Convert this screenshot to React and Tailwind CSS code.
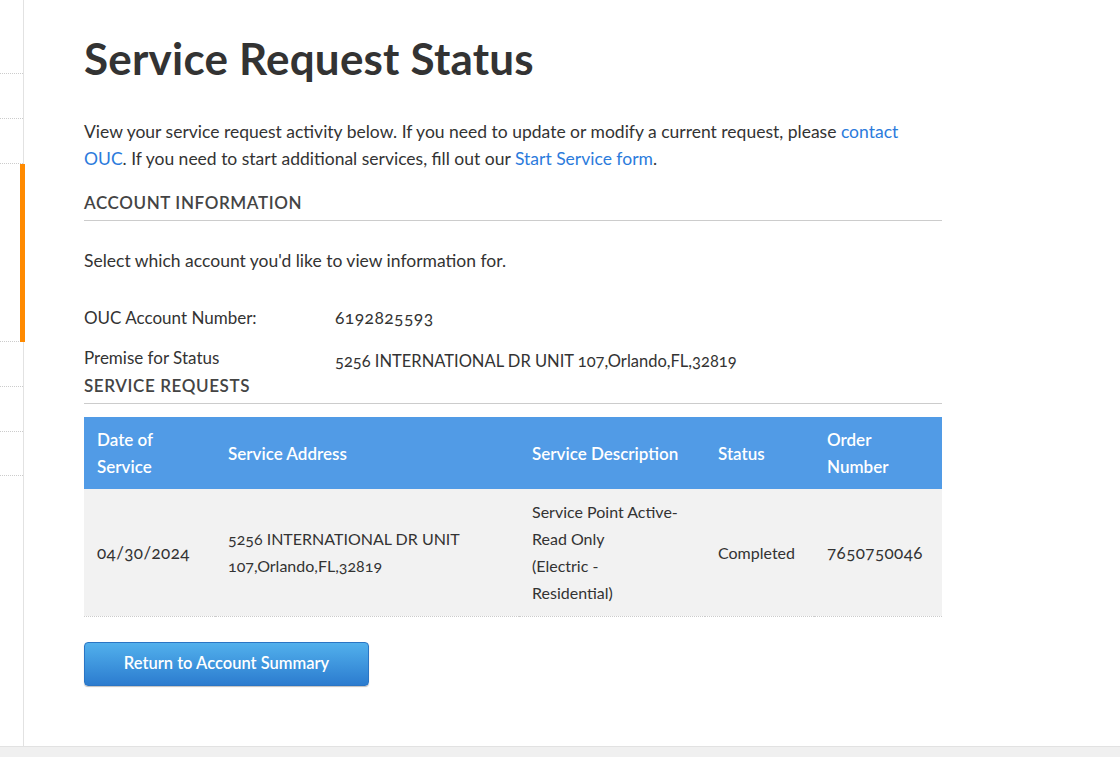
export default function App() {
  const font = { fontFamily: 'Lato, "Open Sans", sans-serif' };
  return (
    <div className="min-h-[757px] flex flex-col bg-white text-[#333] oldstyle-nums" style={font}>
      <div className="flex flex-1">
        <aside className="w-[24px] shrink-0 border-r border-[#e2e2e2] flex flex-col pt-[73px]">
          <div className="h-[45px] border-t border-dotted border-[#ccc]" />
          <div className="h-[45px] border-t border-dotted border-[#ccc]" />
          <div className="h-[178px] border-t border-dotted border-[#ccc] relative">
            <div className="absolute right-[-2px] top-0 h-[178px] w-[5px] bg-[#ff8a00]" />
          </div>
          <div className="h-[45px] border-t border-dotted border-[#ccc]" />
          <div className="h-[45px] border-t border-dotted border-[#ccc]" />
          <div className="h-[45px] border-t border-dotted border-[#ccc] border-b" />
        </aside>
        <main className="pl-[60px] pt-[30px] w-[918px]">
          <h1 className="text-[44px] font-bold leading-[56px] text-[#333] tracking-[0.2px]">Service Request Status</h1>
          <p className="mt-[32px] text-[17.5px] leading-[27px]">
            View your service request activity below. If you need to update or modify a current request, please{' '}
            <a className="text-[#2b7bdc]" href="#">contact OUC</a>. If you need to start additional services, fill out our{' '}
            <a className="text-[#2b7bdc]" href="#">Start Service form</a>.
          </p>
          <h2 className="mt-[19px] pb-[5px] border-b border-[#ccc] text-[17px] font-semibold uppercase tracking-[0.6px] text-[#444] leading-[24px]">
            Account Information
          </h2>
          <p className="mt-[26px] text-[17.5px] leading-[27px]">Select which account you'd like to view information for.</p>
          <div className="mt-[30px] flex text-[17px] leading-[27px]">
            <span className="w-[251px]">OUC Account Number:</span>
            <span className="text-[17.5px] tracking-[0.4px]">6192825593</span>
          </div>
          <div className="mt-[15px] flex text-[17px] leading-[24px]">
            <span className="w-[251px]">Premise for Status</span>
            <span className="mt-[3px] text-[16.5px]">5256 INTERNATIONAL DR UNIT 107,Orlando,FL,32819</span>
          </div>
          <h2 className="mt-[1px] pb-[5px] border-b border-[#ccc] text-[17px] font-semibold uppercase tracking-[0.6px] text-[#444] leading-[24px]">
            Service Requests
          </h2>
          <table className="mt-[13px] w-full text-[16px] leading-[27px] border-collapse">
            <thead>
              <tr className="bg-[#519be6] text-white text-left h-[72px] text-[17px]">
                <th className="pl-[13px] w-[131px] font-semibold">Date of<br />Service</th>
                <th className="pl-[13px] w-[304px] font-semibold">Service Address</th>
                <th className="pl-[13px] w-[186px] font-semibold">Service Description</th>
                <th className="pl-[13px] w-[109px] font-semibold">Status</th>
                <th className="pl-[13px] font-semibold">Order<br />Number</th>
              </tr>
            </thead>
            <tbody>
              <tr className="bg-[#f2f2f2] h-[127px] border-b border-dotted border-[#ccc]">
                <td className="pl-[13px] text-[17px] tracking-[0.4px]">04/30/2024</td>
                <td className="pl-[13px]">5256 INTERNATIONAL DR UNIT<br />107,Orlando,FL,32819</td>
                <td className="pl-[13px]">Service Point Active-<br />Read Only<br />(Electric -<br />Residential)</td>
                <td className="pl-[13px]">Completed</td>
                <td className="pl-[13px] text-[17px] tracking-[0.4px]">7650750046</td>
              </tr>
            </tbody>
          </table>
          <button className="mt-[25px] w-[285px] h-[44px] rounded-[4px] border border-[#2a75c4] bg-gradient-to-b from-[#52b0ec] to-[#2c7ccf] text-white text-[16.5px] font-semibold shadow-[0_1px_1px_rgba(0,0,0,0.25)]">
            Return to Account Summary
          </button>
        </main>
      </div>
      <footer className="h-[11px] bg-[#f0f0f0] border-t border-[#e2e2e2]" />
    </div>
  );
}
